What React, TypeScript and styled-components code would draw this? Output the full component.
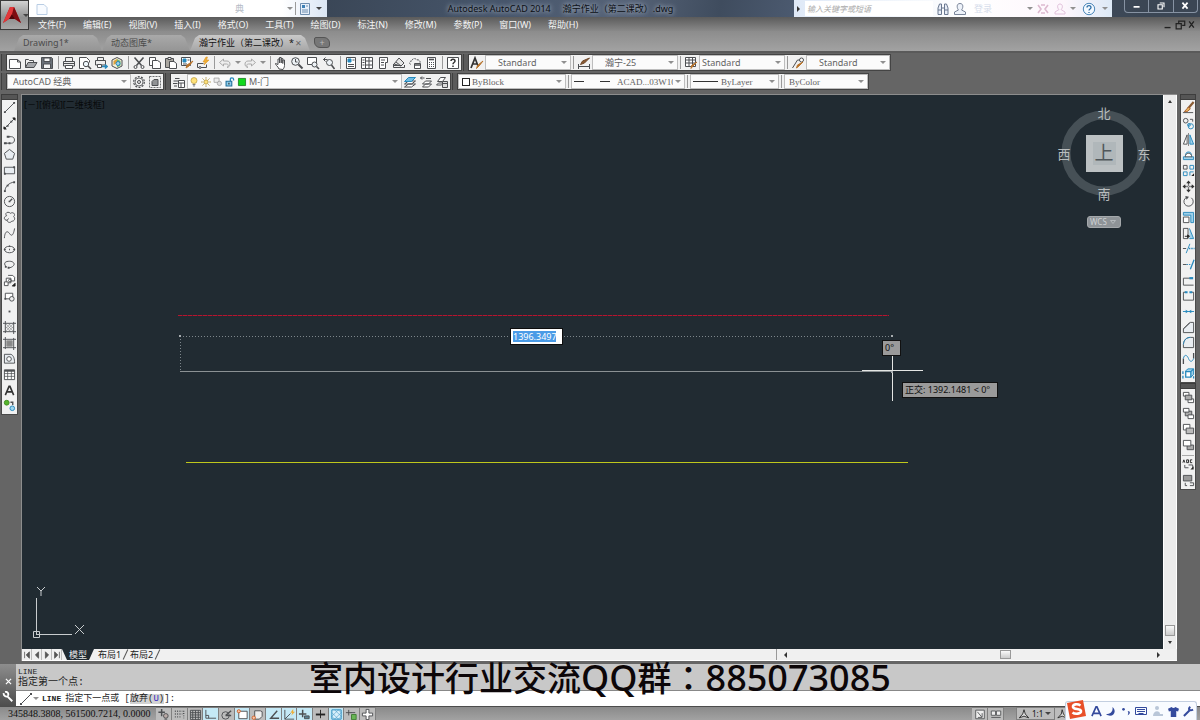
import React from "react";
import styled, { createGlobalStyle, css } from "styled-components";

const UI = `"Noto Sans", "Noto Sans CJK SC", sans-serif`;
const SONG = `"Liberation Serif", "Noto Sans CJK SC", serif`;
const MONO = `"Liberation Mono", "Noto Sans CJK SC", monospace`;

const Global = createGlobalStyle`
  *, *::before, *::after { box-sizing: border-box; }
  body { margin: 0; background: #656565; font-family: ${UI}; font-size: 9px; line-height: 12px; }
  button, select, input { font: inherit; margin: 0; padding: 0; border: 0; background: none; color: inherit; border-radius: 0; }
  h1, p { margin: 0; font: inherit; }
`;

/* ---------- icons, drawn on a 14 unit grid ---------- */

const K = "#4d4f52";
const B = "#2789bd";
const O = "#b8742c";

const icons: Record<string, React.ReactNode> = {
  new: <path d="M1.500 3.500h8l3 2.500v6.500h-11zM9.500 3.500v2.500h3" fill="#fff" />,
  open: <><path d="M1.500 11.500v-8h3l1 1h4v2" /><path d="M1.500 11.500l2.500-5h9l-3 5z" fill="#a5a7aa" /></>,
  save: <><path d="M1.500 1.500h10l1 1v10h-11z" fill="#6a7078" /><path d="M4 2h6v3.500h-6zM3.500 8h7v4.500h-7z" fill="#f5f5f5" /></>,
  print: <><path d="M3.500 5.500v-4h7v4M1.500 5.500h11v4.500h-11z" fill="#eee" /><path d="M3.500 9.500h7v3h-7z" fill="#fff" /><path d="M2 7.500h10" /></>,
  preview: <><path d="M6 12.500h-4.500v-11h7l3 3v2" fill="#fff" /><circle cx="8" cy="8" r="2.700" fill="#eef6fb" /><path d="M10 10l3 3" strokeWidth="1.600" /></>,
  publish: <><path d="M3.500 4.500v-3h6v3M1.500 4.500h10v4.500h-10z" fill="#eee" /><path d="M3.500 8.500h4v3h-4z" fill="#fff" /><path d="M8 10.500h5M11 8.500l2 2-2 2" stroke={B} strokeWidth="1.600" /></>,
  dwf: <><path d="M2 4l5-2.500 5 2.500v6l-5 2.500-5-2.500z" fill="#f4f0dc" /><path d="M7 3l3.500 2v4.500l-3.500 2z" fill="#73b36a" stroke="none" /><path d="M7 7V3L3.500 5v4z" fill="#e0a13a" stroke="none" /><circle cx="8" cy="7.500" r="2" fill="#9fd1ea" stroke={B} /></>,
  cut: <><path d="M2.500 1.500l7 8M11.500 1.500l-7 8" strokeWidth="1.600" /><circle cx="3.500" cy="11" r="1.500" /><circle cx="10.500" cy="11" r="1.500" /></>,
  copy: <><path d="M1.500 1.500h6v8h-6z" fill="#fff" /><path d="M4.500 4.500h5l3 2v6h-8z" fill="#fff" /></>,
  paste: <><path d="M1.500 2.500h8v9h-8z" fill="#a9a6a0" /><path d="M4 1.500h3v2h-3z" fill="#fff" /><path d="M5.500 5.500h4.500l2.500 2v5h-7z" fill="#fff" /></>,
  match: <><path d="M1.500 1.500h9v8h-9z" fill="#fff" /><path d="M3 3h3v3h-3z" fill={B} stroke={B} /><path d="M7.500 4h2M3 8h4" /><path d="M13 5l-4 5-3 2 1-3z" fill={O} stroke={O} /></>,
  block: <><path d="M1.500 7.500h6M1.500 7.500v4h9v-3" fill="none" /><path d="M10 1l-3 5h2l-1 3 5-5h-2.500l1-3z" fill="#f0ae33" stroke="#d88f1e" strokeWidth=".5" /><circle cx="4" cy="11.500" r="1" fill="#fff" /></>,
  undo: <path d="M1.500 6.500l4-3.500v2h3.500c4 0 4 6 0 6.500c2-1.500 1.500-3.500-.5-3.500h-3v2z" fill="#eee" stroke="#aaa" />,
  redo: <path d="M12.500 6.500l-4-3.500v2h-3.500c-4 0-4 6 0 6.500c-2-1.500-1.500-3.500.5-3.500h3v2z" fill="#eee" stroke="#aaa" />,
  pan: <path d="M5 13c-1-3-4-4-3.500-5.500l2.500 1v-5.500h1.500v4-5.500h1.700v5.500-4.500h1.600v5-3.500h1.700v5.500c0 2-1 3-1.500 4z" fill="#fff" />,
  zoomrt: <><circle cx="5.500" cy="5.500" r="3.800" fill="#eef3f7" /><path d="M5.500 3v3h2" /><path d="M8.500 8.500l4 4" strokeWidth="2" /></>,
  zoomwin: <><path d="M1.500 1.500h9v7h-9z" fill="#fff" /><circle cx="8.500" cy="8.500" r="2.500" fill="#eef3f7" /><path d="M10.500 10.500l2.500 2.500" strokeWidth="1.600" /></>,
  zoomprev: <><circle cx="7.500" cy="6.500" r="3" fill="#eef3f7" /><path d="M9.500 9l3 4" strokeWidth="1.600" /><path d="M5.500 3.500h-4M3.500 1.500l-2 2 2 2" stroke={K} /></>,
  props: <><path d="M2.500 1.500h9v11h-9z" fill="#fff" /><path d="M4 3h3v3h-3z" fill={B} stroke={B} /><path d="M8.500 4h2M4 8.500h6M4 10.500h6" /></>,
  dc: <><path d="M1.500 1.500h11v11h-11zM5.500 1.500v11M5.500 5h7M5.500 9h7M9 1.500v11" fill="#fff" /><path d="M2.500 4h2M2.500 6.500h2M2.500 9h2" /></>,
  palette: <><path d="M3.500 1.500h8v5h-2v6h-6z" fill="#fff" /><path d="M5 4h4M5 6.500h3M5 9h3" /></>,
  sheet: <><path d="M2 8l5-6 5 5-3 3z" fill="#e6e6e6" /><path d="M4 6l5 4M1.500 8v3.500h11v-2.500M1.500 9.500h8" fill="none" /></>,
  markup: <><path d="M2.500 8.500c-2-2 0-4 1.500-3.500c0-3 4-3 4.500-1c3-1 4.500 2 3 3.500" fill="none" strokeDasharray="2 1" /><path d="M6.500 7.500h6v5h-6z" fill="#fff" /><path d="M6.500 9h6" strokeWidth="1.500" /></>,
  calc: <><path d="M3.500 1.500h8v11h-8z" fill="#fff" /><path d="M5 3.500h5" strokeWidth="1.600" /><path d="M5 6.500h5M5 8.500h5M5 10.500h5" strokeDasharray="1 1" /></>,
  textstyle: <><path d="M1 12L5 2l3 8M2.500 8h4.500" strokeWidth="1.700" stroke="#333" /><path d="M13 5l-4 5-2.500 2.500 1-3z" fill={O} stroke={O} /></>,
  dimstyle: <><path d="M1.500 8v5M12.500 8v5M1.500 10.500h11" /><path d="M12.500 2l-5 5-4 1.500 2-3.500z" fill="#8b5a33" stroke="#6d472a" /></>,
  tablestyle: <><path d="M1.500 1.500h10v9h-10zM1.500 4h10M5 1.500v9M8.500 1.500v9M1.500 7h10" fill="#fff" /><path d="M13 6l-4 4-2 2.500.5-3z" fill={O} stroke={O} /></>,
  mleader: <><path d="M1.500 12l5-8h3" /><circle cx="10.500" cy="4" r="2" fill="#fff" /><path d="M12 6l-4 4-2.500 2 1-3z" fill={O} stroke={O} /></>,
  gear: <><circle cx="7" cy="7" r="5.300" strokeDasharray="2 1.300" strokeWidth="1.200" /><circle cx="7" cy="7" r="4" strokeWidth=".8" /><circle cx="7" cy="7" r="1.500" /></>,
  gearbox: <><path d="M1.500 1.500h11v11h-11z" strokeDasharray="2 1" strokeWidth=".8" /><path d="M4 6.500l2-2h4v6h-6z" fill="#909294" /></>,
  layermgr: <><path d="M3 3.500h4.500M1.500 6h5M1 8.500h4.500M2 11h3" strokeWidth="1.100" /><path d="M6.500 5.500h6v7h-6zM6.500 8h6M9 8v4.500" fill="#fff" /></>,
  bulb: <><circle cx="7" cy="5" r="4.200" fill="#ffe27a" stroke="#b89a3d" /><path d="M5 10.500h4M5.500 12.500h3" /></>,
  sun: <><circle cx="7" cy="7" r="3" fill="#ffe07a" stroke="#a48830" /><path d="M7 0v2.500M7 11.500V14M0 7h2.500M11.500 7H14M2 2l2 2M10 10l2 2M2 12l2-2M10 4l2-2" stroke="#a48830" /></>,
  vpfreeze: <><path d="M1.500 1.500h7v6h-7z" stroke="#999" fill="#eee" /><circle cx="9" cy="9" r="3" stroke="#999" fill="#ddd" /></>,
  unlock: <><path d="M7.500 6V3c0-2.500 4.500-2.500 4.500 0v2" stroke={B} strokeWidth="1.800" /><path d="M1.500 6h8v6.500h-8z" fill="#8fcdea" stroke="#1f6f9c" strokeWidth="1.500" /><path d="M5.500 8v2.500" stroke="#222" strokeWidth="1.500" /></>,
  green: <path d="M2 2h10v10h-10z" fill="#12d81d" stroke="#0b6d12" />,
  layer1: <><path d="M1.500 12h7l4-3h-7zM1.500 9h7l4-3h-7z" fill="#fff" /><path d="M1.500 6.500h7l4-4h-7z" fill="#70bce2" stroke={B} /></>,
  layer2: <><path d="M3.500 12h6l3-3h-6zM3.500 9h6l3-3h-6z" fill="#fff" /><path d="M7 3.500h5M1.500 3h4M3 1.500l-1.500 1.500 1.500 1.500" /></>,
  layer3: <><path d="M1.500 10h5l2-2h-5zM2.500 6.500h5l3-4h-5z" fill="#fff" /><path d="M7.500 6.500h5v6h-5zM7.500 8.500h5" fill="#ddd" /></>,
  line: <><path d="M2 12L12 2" /><path d="M1 12h2M11 2h2" strokeWidth="2" /></>,
  xline: <><path d="M2 12L12 2" /><path d="M1 10.500v2.500h2.500zM10.500 1H13v2.500z" fill="#222" stroke="#222" /><path d="M4 9.500h2M8 5h2" strokeWidth="1.800" /></>,
  pline: <><path d="M2 11h7c4.500 0 4.500-7 0-7h-4" /><path d="M1 11h3M6 11h2M4 4h3" strokeWidth="2" /></>,
  polygon: <path d="M7 1.500l5.500 4.300-2 6.200h-7l-2-6.200z" fill="#e9edf1" />,
  rect: <><path d="M1.500 3.500h11v7h-11z" fill="#e9edf1" /><path d="M1 10.500h2M11 3.500h2" strokeWidth="2.400" /></>,
  arc: <><path d="M2 13C2 7 6 3 13 2" /><path d="M1 12h2M11 2.500h2M4 6h2" strokeWidth="2" /></>,
  circle: <><circle cx="7" cy="7" r="5.500" /><path d="M7 7l3-3M6 7h2" strokeWidth="1.400" /></>,
  cloud: <path d="M4 5c-3-3 2-5 4-2.500c3-2 6 1 3.500 3.500c2 2 1 5-2 5c-2 2.500-5 1-5-1c-4 0-4-4-.5-5zM4.500 10l1.500-2" />,
  spline: <path d="M1.500 12C2 4 5 4 7 7s4 3 5.500-5.500" />,
  ellipse: <><ellipse cx="7" cy="7" rx="5.500" ry="3.500" /><path d="M1 7h2M11 7h2M6.500 7h1M6.500 3.500h1" strokeWidth="1.800" /></>,
  earc: <><path d="M3 9C0 5 3 3.500 7 3.500s6 2.500 4.500 4.500-4 2.500-5 2.500" /><path d="M2 9.500h2M5 10.500h2" strokeWidth="2" /></>,
  insert: <><path d="M5.500 1.500h5l2 2v4h-4M3.500 4.500h5v5h-5z" fill="#fff" /><path d="M1.500 8.500h4v4h-4z" fill="#fff" /><circle cx="7.500" cy="7" r="1.500" /><path d="M10 13h3v-3z" fill="#222" stroke="#222" /></>,
  mkblock: <><path d="M2.500 3.500h8v6h-8z" fill="#fff" /><circle cx="9.500" cy="9.500" r="2.500" fill="#eee" /><path d="M1.500 9.500h2" strokeWidth="2" /></>,
  point: <path d="M6 7h2" strokeWidth="2" />,
  hatch: <><path d="M2.500 0v13M11.500 1v13M0 2.500h14M0 11.500h14" /><path d="M3 3l8 8M3 6l5 5M6 3l5 5M11 3l-8 8M8 3L3 8M11 6l-5 5" strokeWidth=".4" /></>,
  gradient: <><path d="M2.500 0v13M11.500 1v13M0 2.500h14M0 11.500h14" /><path d="M4 4h6v6h-6z" fill="#888" stroke="#999" /></>,
  region: <><path d="M1.500 2.500h7c3 1 4 5 4 9.500h-11z" fill="#e9edf1" /><circle cx="6.500" cy="7.500" r="2.500" fill="#fff" /></>,
  table: <><path d="M1.500 2h11v10.500h-11z" fill="#fff" /><path d="M1.500 3h11" strokeWidth="2" /><path d="M1.500 6h11M1.500 9h11M5 3v9M9 3v9" strokeWidth=".8" /></>,
  mtext: <path d="M2.500 12L6.500 2.500h1l4 9.500M4.300 8.500h5.400" stroke="#333" strokeWidth="1.700" />,
  addsel: <><circle cx="4" cy="4" r="2.600" fill="#56b52c" stroke="#3f8c1f" /><circle cx="10" cy="10" r="2.500" fill="#9fd6f0" stroke={B} /><path d="M8 3.500h2.500v3" strokeWidth="1.500" /></>,
  erase: <><path d="M12.500 1l-6 7" stroke="#8b5d35" strokeWidth="2.400" /><path d="M7 6.500l2 2-3.500 3h-3z" fill="#e8b45c" stroke="#a55b2e" /><path d="M1 12.500h11" /></>,
  copyobj: <><circle cx="4" cy="4" r="2.500" /><circle cx="9.500" cy="10" r="2.800" stroke={B} /><circle cx="7.500" cy="8.500" r="1.500" stroke={B} /><path d="M8.500 2.500h3v2.500" /></>,
  mirror: <><path d="M5.500 2v10h-4z" fill="#fff" /><path d="M8.500 2v10h4z" fill="#9fd1ea" stroke={B} /><path d="M7 0v14" strokeWidth=".7" /></>,
  offset: <><path d="M1.500 12.500h11v-3h-2.500c2-7-8-7-6 0h-2.500z" fill="#9fd1ea" stroke={B} /><path d="M3.500 9.500h7c0-5-7-5-7 0z" fill="#fff" /></>,
  array: <><path d="M1.500 1.500h4v4h-4z" /><path d="M8.500 1.500h4v4h-4zM1.500 8.500h4v4h-4z" stroke={B} /><path d="M8.500 12.500v-4h4" stroke={B} /><path d="M10 13h3v-3z" fill="#222" stroke="none" /></>,
  move: <><path d="M7 2v3M7 9v3M2 7h3M9 7h3" strokeWidth="1.400" /><path d="M4.500 3.500L7 .5l2.500 3zM4.500 10.500l2.500 3 2.500-3zM3.500 4.500L.5 7l3 2.500zM10.500 4.500l3 2.500-3 2.500z" fill="#333" stroke="none" /><circle cx="7" cy="7" r="1" /></>,
  rotate: <><path d="M5 2.500a5 5 0 1 0 5 .5" /><path d="M3.500 1l4 1-2.500 3z" fill={K} stroke="none" /></>,
  scale: <><path d="M1.500 1.500h11v11h-3v-8h-8z" fill="#9fd1ea" stroke={B} /><path d="M1.500 6.500h6v6h-6z" fill="#fff" /></>,
  stretch: <><path d="M1.500 1.500h5v11h-5z" /><path d="M8 1.500l4.500 11h-4.500" fill="#9fd1ea" stroke={B} /><path d="M3 10h5M6 8.500L8 10l-2 1.500z" stroke="#222" /></>,
  trim: <><path d="M1 7h3.500" /><path d="M8.500 2l-4 10" stroke={B} /><path d="M7.500 7h6" stroke={B} strokeDasharray="1.500 1" strokeWidth="1.400" /></>,
  extend: <><path d="M1 7h4" /><path d="M5 7h4" strokeDasharray="1.500 1" stroke={B} /><path d="M13 2l-4 10" stroke={B} strokeWidth="1.400" /></>,
  breakpt: <><path d="M9 4.500h-7.500v7.500h11" /><path d="M8 4.500h4" stroke={B} strokeWidth="2.400" /></>,
  brk: <><path d="M4 3.500h-2.500v8.500h11v-8.500h-2.500" /><path d="M3 3.500h3M8 3.500h3" stroke={B} strokeWidth="2.400" /></>,
  join: <><path d="M1 7h12" stroke={B} /><path d="M4 5l3 2-3 2zM10 5L7 7l3 2z" fill={B} stroke="none" /></>,
  chamfer: <><path d="M1.500 12.500v-4L9 1.500h3.500v11z" fill="#e9edf1" /><path d="M1.500 8.500L8.500 1.500" /></>,
  fillet: <><path d="M1.500 12.500V9C2 4 5 1.500 9 1.500h3.500v11z" fill="#e9edf1" /><path d="M1.500 9C2 4 5 1.500 9 1.500" stroke={B} /></>,
  blend: <><path d="M1.500 13V7M12.500 1v6" strokeWidth="1.400" /><path d="M1.500 7c1-5 4-4 5.500 0s4 4 5.500 0" stroke={B} /></>,
  explode: <><path d="M3.500 4.500l3-2.500h6v6l-3 3" fill="#9fd1ea" stroke={B} /><path d="M4 5h5.500v6h-5.500zM9.500 5l3-3" fill="#fff" stroke={B} strokeWidth="1.400" /><path d="M1 4.500v3M1 9.500v3M12.500 10v2.500" stroke={B} strokeWidth="1.400" /></>,
  front: <><path d="M1.500 1.500h6v4h-6zM6.500 8.500h6v4h-6z" fill="#fff" /><path d="M3.500 4.500h7v5h-7z" fill="#aaa" /></>,
  back: <><path d="M3.500 4.500h7v5h-7z" fill="#aaa" /><path d="M1.500 1.500h6v4h-6zM6.500 8.500h6v4h-6z" fill="#fff" /></>,
  above: <><path d="M1.500 1.500h7v6h-7z" fill="#fff" /><path d="M4.500 5.500h8v6h-8z" fill="#bbb" /></>,
  under: <><path d="M5.500 6.500h7v5h-7z" fill="#aaa" /><path d="M1.500 1.500h8v6h-8z" fill="#fff" /></>,
  abc: <><path d="M1 5l1-3 1 3M5 2h2v3H5zM11 2H9v3H11" stroke="#222" /><path d="M3 7.500v3h4M7 7.500h4.500v4" /><path d="M9 12.500h3.500V9z" fill="#222" stroke="none" /></>,
  hback: <><path d="M1.500 1.500h9v6h-9z" fill="#999" /><path d="M8.500 9.500h4v3h-4M3.500 9.500v3h2" /></>,
  qnew: <path d="M2 2.500h7l3 3v7h-10z" stroke="#b9cde4" fill="#f8fbff" />,
  ws: <><path d="M2.500 1.500h9v11h-9z" fill="#e6effa" stroke="#6f8eb0" /><path d="M4 3h3v3h-3z" fill="#3c7fb5" stroke="none" /><path d="M8 4h2M4 8h6M4 10h6" stroke="#6f8eb0" /></>,
  find: <path d="M2 12.500V6l1.500-4h2V12.500zM8.500 12.500V2h2L12 6v6.500zM5.500 6h3M2 8h3.500M8.500 8H12" stroke="#6a7890" fill="#e8eef8" />,
  user: <path d="M7 1.500c4 0 3 5 1.500 6.500l4 2v2.500h-11V10l4-2C4 6.500 3 1.500 7 1.500z" stroke="#7a869a" fill="#eef3fa" />,
  exch: <path d="M2 3l3 4-3 4M12 3L9 7l3 4M5 3h4M5 11h4" stroke="#ddb9cf" strokeWidth="1.600" />,
  a360: <path d="M7 2c3 0 3 4 1 5.500l4 2.500v2H2v-2l4-2.500C4 6 4 2 7 2z" stroke="#e2c2dc" />,
  help: <><circle cx="7" cy="7" r="5.700" stroke="#4a86b8" fill="#f2f8ff" /><path d="M5 5.500c0-2.500 4-2.500 4 0C9 7 7 7 7 8.500M7 10v1" stroke="#2d6da5" strokeWidth="1.300" /></>,
  qmark: <><path d="M1.500 1.500h11v11h-11z" fill="#fff" /><path d="M5 5c0-2.500 4-2.500 4 0 0 1.500-2 1.500-2 3.200M7 9.500v1.500" strokeWidth="1.500" stroke="#333" /></>,
  min: <path d="M3 8h7" stroke="#fff" strokeWidth="2" />,
  max: <path d="M5.500 3.500h5v5M3.500 5.500h5v5h-5z" stroke="#fff" strokeWidth="1.300" />,
  close: <path d="M4 3l6 7M10 3l-6 7" stroke="#fff" strokeWidth="2" />,
  dmin: <path d="M3 10h7" stroke="#222" strokeWidth="1.600" />,
  dmax: <path d="M5.500 5v-2.500h7v5h-3M2.500 5.500h6v6h-6z" stroke="#222" strokeWidth="1.400" />,
  dclose: <path d="M4 3l6 8M10 3l-6 8" stroke="#222" strokeWidth="1.700" />,
  x: <path d="M3 3l8 8M11 3l-8 8" stroke="#fff" strokeWidth="1.900" />,
  wrench: <path d="M12 12L6 6M2 2.500c-.5 3 2.500 5 5 3.500M3.500 1c3-.5 4.500 2 3.500 4.500" stroke="#fff" strokeWidth="2.200" />,
  infer: <><path d="M5 1v8M1.500 4.500h7" strokeWidth="1.600" /><circle cx="9.500" cy="8.500" r="2.500" fill="#b8a9a5" /><path d="M8 12h3" /></>,
  snap: <path d="M2 3.500h8M2 6.500h8M2 9.500h6M11.500 3v8" strokeDasharray="1 1.500" strokeWidth="1.500" />,
  grid: <path d="M1.500 2.500h11v10h-11zM1.500 5h11M1.500 7.500h11M1.500 10h11M4 2.500v10M7 2.500v10M10 2.500v10" />,
  ortho: <path d="M2 2v9h11M2 8h3v3" />,
  polar: <><circle cx="6" cy="8" r="4" /><path d="M6 8l6-5M6 8h6" strokeWidth="1.500" /></>,
  osnap: <><path d="M3 3.500h9v8h-9z" fill="#fff" /><circle cx="3" cy="3.500" r="1.700" fill="#f8c7a8" stroke="#d0622c" /></>,
  osnap3: <><path d="M4 3h6l2 1v5l-3 3h-5z" fill="#eee" /><circle cx="3" cy="10.500" r="1.800" fill="#f8c7a8" stroke="#d0622c" /></>,
  otrack: <path d="M11 3L4 11h9" strokeWidth="1.500" />,
  ducs: <><path d="M2 2v10h10M2 12l6-6" /><path d="M11 1l-3 4h2l-1 3 4-4h-2z" fill="#f0ae33" stroke="none" /></>,
  dyn: <><path d="M5 2v8M1 6.500h8" strokeWidth="1.600" /><path d="M7 8.500h5v3h-5z" fill="#5b7f90" /></>,
  lwt: <><path d="M2 7h10" strokeWidth="2" stroke="#222" /><path d="M7 2v9" stroke="#222" /></>,
  tpy: <><path d="M2 2h10v10h-10z" fill="#d8effa" stroke={B} /><path d="M2 5l7 7M2 9l3 3M5 2l7 7M9 2l3 3M12 5l-7 7M9 2l-7 7M12 9l-3 3" stroke={B} strokeWidth=".5" /></>,
  qp: <><path d="M4 2v6M1 5h6M6 5h5" /><path d="M7 7h5v5.500h-5z" fill="#69b555" stroke="#3f7d34" /></>,
  sc: <path d="M5.500 1.500h3v4h4v3h-4v4h-3v-4h-4v-3h4z" fill="#fff" />,
  model: <><path d="M2 2.500h10v10h-10z" fill="#eee" /><path d="M4 4.500l5 6M9.500 6v5h-5" /></>,
  views: <path d="M1.500 3.500h5v5h-5zM7.500 3.500h5v5h-5zM1.500 11h11" fill="#eee" />,
  scaleA: <path d="M7 2l1.500 5 4 4.500-5.500-2-5.500 2 4-4.500z" fill="#ddd" stroke="#222" />,
  scaleB: <><path d="M6 2l1.500 5 4 4.500-5.500-2-5 2 4-4.500z" fill="#ddd" stroke="#222" /><circle cx="11" cy="9" r="2" fill="#ffd84d" stroke="none" /></>,
  cmd: <><path d="M2 12L12 2" /><path d="M1 12h2M11 2h2" strokeWidth="2" /></>,
};

const Svg = styled.svg<{ $size?: number }>`
  display: block;
  flex: none;
  width: ${(p) => p.$size ?? 14}px;
  height: ${(p) => p.$size ?? 14}px;
`;

const Icon = ({ name, size }: { name: string; size?: number }) => (
  <Svg $size={size} viewBox="0 0 14 14" fill="none" stroke={K} strokeWidth="1" aria-hidden="true">
    {icons[name]}
  </Svg>
);

const Caret = styled.span<{ $light?: boolean }>`
  flex: none;
  width: 0;
  height: 0;
  border: 3px solid transparent;
  border-top-color: ${(p) => (p.$light ? "#909090" : "#444")};
  border-bottom: 0;
  pointer-events: none;
`;

const IconButton = styled.button<{ $w?: number }>`
  display: flex;
  align-items: center;
  justify-content: center;
  flex: none;
  width: ${(p) => p.$w ?? 16}px;
  height: 15px;
`;

/* ---------- page ---------- */

const Page = styled.div`
  position: relative;
  display: flex;
  flex-direction: column;
  min-height: 100vh;
  overflow: hidden;
  background: #656565;
`;

const TitleBar = styled.header`
  display: flex;
  align-items: stretch;
  height: 17px;
  padding-left: 29px;
  background: linear-gradient(100deg, #343f4d 20%, #47566b 42%, #566377 52%, #3f4c5e 60%, #53627a 70%, #3b4654 95%);
`;

const AppButton = styled.button`
  position: absolute;
  left: 0;
  top: 0;
  z-index: 2;
  display: flex;
  align-items: center;
  width: 29px;
  height: 30px;
  border: 1px solid #3a3a3a;
  background: linear-gradient(#d2d2d2, #8f8f8f 60%, #a9a9a9);
`;

const QuickAccess = styled.div`
  display: flex;
  align-items: center;
  width: 298px;
  padding: 0 1px 0 6px;
  background: linear-gradient(90deg, #fff 85%, #dbe6f4);
  color: #b5bcc6;
`;

const QuickSelect = styled.select`
  appearance: none;
  flex: 1;
  padding-left: 186px;
`;

const Title = styled.h1`
  display: flex;
  flex: 1;
  justify-content: center;
  gap: 12px;
  padding-top: 3px;
  color: #0c0f14;
  white-space: nowrap;
  text-shadow: 0 0 4px #aeb9c8, 0 0 6px #8f9caf;
`;

const InfoCenter = styled.div`
  display: flex;
  align-items: center;
  gap: 3px;
  width: 318px;
  padding-right: 2px;
  background: linear-gradient(90deg, #dfe9f7, #fff 55%, #fdf6fc 85%, #dde9f6);
  color: #d5dcea;
`;

const Search = styled.input`
  width: 128px;
  height: 15px;
  padding: 0 2px;
  background: #fff;
  font-size: 8px;
  font-style: italic;
  &::placeholder { color: #a9a9a9; opacity: 1; }
`;

const SideArrow = styled.span<{ $left?: boolean }>`
  width: 0;
  height: 0;
  border: 3px solid transparent;
  ${(p) => (p.$left ? css`border-right-color: #333; border-left: 0;` : css`border-left-color: #333; border-right: 0;`)}
`;

const SignIn = styled.span`
  width: 54px;
  padding-left: 4px;
`;

const WindowButtons = styled.div`
  display: flex;
  width: 74px;
  height: 13px;
  margin: 0 2px 0 12px;
  border: 1px solid #8793a3;
  border-top: 0;
  border-radius: 0 0 4px 4px;
  button { flex: 1; height: 12px; display: flex; align-items: center; justify-content: center; }
  button + button { border-left: 1px solid #8793a3; }
`;

const MenuBar = styled.nav`
  display: flex;
  align-items: center;
  height: 14px;
  gap: 17px;
  padding: 1px 3px 0 38px;
  background: linear-gradient(#5b5b5b, #898989);
  color: #f4f4f4;
  white-space: nowrap;
`;

const DocButtons = styled.div`
  display: flex;
  margin-left: auto;
`;

const TabBar = styled.div`
  display: flex;
  align-items: flex-end;
  height: 22px;
  padding-left: 14px;
  border-bottom: 2px solid #5a5a5a;
  background: linear-gradient(#8c8c8c, #a2a2a2);
`;

const DocTab = styled.button<{ $active?: boolean; $w: number }>`
  display: flex;
  align-items: center;
  justify-content: space-between;
  width: ${(p) => p.$w}px;
  height: 16px;
  padding: 0 8px 0 9px;
  color: ${(p) => (p.$active ? "#111" : "#4b4b4b")};
  background: ${(p) => (p.$active ? "linear-gradient(#c9c9c9, #a6a6a6)" : "linear-gradient(#a9a9a9, #959595)")};
  clip-path: polygon(0 100%, 5px 3px, 9px 0, calc(100% - 9px) 0, calc(100% - 5px) 3px, 100% 100%);
  white-space: nowrap;
`;

const TabClose = styled.span`
  color: #666;
  font-size: 8px;
`;

const NewTab = styled.button`
  width: 16px;
  height: 11px;
  margin: 0 0 3px 4px;
  border: 1px solid #555;
  border-radius: 2px 6px 3px 6px;
  background: #777;
  color: #bbb;
  line-height: 8px;
`;

const Toolbars = styled.div`
  display: flex;
  flex-direction: column;
  gap: 2px;
  padding: 1px 0 4px 1px;
`;

const ToolRow = styled.div`
  display: flex;
  height: 17px;
`;

const Grip = styled.span`
  width: 6px;
  border: 1px solid #3f3f3f;
  border-width: 0 1px;
  background: #5b5b5b;
`;

const Strip = styled.div`
  display: flex;
  align-items: center;
  margin-right: 1px;
  border: 1px solid #444;
  border-left: 0;
  background: #f1f1f1;
`;

const Separator = styled.span<{ $wide?: boolean }>`
  width: 1px;
  height: 13px;
  margin: 0 2px 0 ${(p) => (p.$wide ? 3 : 2)}px;
  background: #9a9a9a;
`;

const Combo = styled.label<{ $w: number; $song?: boolean; $pad?: number }>`
  display: flex;
  align-items: center;
  gap: 2px;
  width: ${(p) => p.$w}px;
  height: 15px;
  padding: 0 3px 0 ${(p) => p.$pad ?? 5}px;
  border: 1px solid #bdbdbd;
  background: #fbfbfb;
  color: #636363;
  font-family: ${(p) => (p.$song ? SONG : UI)};
  select { appearance: none; flex: 1; min-width: 0; overflow: hidden; }
`;

const Swatch = styled.span`
  width: 8px;
  height: 8px;
  border: 1px solid #222;
  background: #fff;
`;

const Dash = styled.span<{ $w: number; $gap: number }>`
  flex: none;
  width: ${(p) => p.$w}px;
  height: 1px;
  margin-right: ${(p) => p.$gap}px;
  background: #333;
`;

const Work = styled.main`
  display: flex;
  flex: 1;
  align-items: stretch;
`;

const SideColumn = styled.div<{ $right?: boolean }>`
  display: flex;
  flex-direction: column;
  width: ${(p) => (p.$right ? 16 : 18)}px;
  margin: ${(p) => (p.$right ? "0 4px 0 3px" : "0 3px 0 0")};
  padding-left: ${(p) => (p.$right ? 0 : 1)}px;
`;

const SideGrip = styled.span`
  height: 6px;
  border: 1px solid #3d3d3d;
  background: #555;
`;

const SideStrip = styled.div<{ $h: number }>`
  display: flex;
  flex-direction: column;
  align-items: center;
  justify-content: space-around;
  height: ${(p) => p.$h}px;
  border: 1px solid #4a4a4a;
  border-top: 0;
  background: #f1f1f1;
  button { width: 14px; height: 14px; }
  svg { width: 13px; height: 13px; }
  hr { width: 12px; height: 1px; margin: 0; border: 0; background: #aaa; }
`;

const Frame = styled.section`
  display: flex;
  flex: 1;
  flex-direction: column;
  min-width: 0;
  border: 1px solid #8d8d8d;
  border-width: 1px 0 0 1px;
`;

const CanvasRow = styled.div`
  display: flex;
  flex: 1;
`;

const Canvas = styled.div`
  position: relative;
  flex: 1;
  min-height: 554px;
  overflow: hidden;
  background: #212b32;
`;

const Drawing = styled.svg`
  position: absolute;
  left: 0;
  top: 0;
  width: 100%;
  height: 100%;
`;

const ViewLabel = styled.p`
  position: absolute;
  left: 2px;
  top: 4px;
  color: #07090a;
`;

const Ucs = styled.svg`
  position: absolute;
  left: 9px;
  bottom: 7px;
  width: 60px;
  height: 56px;
`;

const Cube = styled.svg`
  position: absolute;
  right: 9px;
  top: 8px;
  width: 100px;
  height: 102px;
  font-family: "Noto Sans CJK SC", sans-serif;
  font-size: 13px;
`;

const Wcs = styled.button`
  position: absolute;
  right: 42px;
  top: 121px;
  display: flex;
  align-items: center;
  justify-content: space-between;
  width: 34px;
  height: 12px;
  padding: 0 4px 0 2px;
  border: 1px solid #a4a8ab;
  border-radius: 3px;
  background: #8e9397;
  color: #cdd1d3;
  font-size: 8px;
  line-height: 10px;
`;

const LengthInput = styled.input`
  position: absolute;
  left: 488px;
  top: 233px;
  width: 53px;
  height: 17px;
  padding: 0 6px 0 0;
  border: 1px solid #0d0d0d;
  background: linear-gradient(#4a9be6, #4a9be6) 2px 2px / 43px 11px no-repeat #fff;
  color: #fff;
  text-indent: 2px;
`;

const Tip = styled.span<{ $x: number; $y: number; $w: number }>`
  position: absolute;
  left: ${(p) => p.$x}px;
  top: ${(p) => p.$y}px;
  width: ${(p) => p.$w}px;
  height: 16px;
  padding: 1px 2px;
  border: 1px solid #111;
  background: #9a9a9a;
  color: #111;
  white-space: nowrap;
`;

const VScroll = styled.div`
  display: flex;
  flex-direction: column;
  align-items: center;
  width: 14px;
  padding: 5px 0;
  border-left: 1px solid #fff;
  border-right: 1px solid #fff;
  background: #ececec;
`;

const Up = styled.span`
  border: 2px solid transparent;
  border-bottom: 3px solid #333;
  border-top: 0;
`;

const Down = styled.span`
  margin-top: 5px;
  border: 2px solid transparent;
  border-top: 3px solid #333;
  border-bottom: 0;
`;

const Thumb = styled.span<{ $v?: boolean }>`
  width: ${(p) => (p.$v ? 10 : 11)}px;
  height: ${(p) => (p.$v ? 11 : 9)}px;
  border: 1px solid #999;
  background: linear-gradient(#fafafa, #ccc);
  margin-top: ${(p) => (p.$v ? "auto" : "0")};
`;

const LayoutBar = styled.div`
  display: flex;
  align-items: center;
  height: 12px;
  background: #f0f0f0;
  border-bottom: 1px solid #fff;
`;

const NavButton = styled.button`
  display: flex;
  width: 10px;
  height: 11px;
  align-items: center;
  justify-content: center;
  border-right: 1px solid #bbb;
`;

const LayoutTab = styled.button<{ $active?: boolean }>`
  width: ${(p) => (p.$active ? 32 : 31)}px;
  height: 11px;
  line-height: 11px;
  color: ${(p) => (p.$active ? "#e9e9e9" : "#222")};
  ${(p) => p.$active && css`background: #212b32; clip-path: polygon(0 0, 100% 0, calc(100% - 5px) 100%, 5px 100%);`}
`;

const Slash = styled.span`
  width: 1px;
  height: 11px;
  background: #555;
  rotate: 25deg;
`;

const HScroll = styled.div`
  display: flex;
  align-items: center;
  flex: none;
  width: 401px;
  height: 11px;
  margin-left: auto;
  padding: 0 17px 0 7px;
  border-left: 1px solid #999;
`;

const Track = styled.span<{ $grow: number }>`
  flex: ${(p) => p.$grow};
`;

const Command = styled.section`
  position: relative;
  display: flex;
  height: 43px;
  margin-top: 3px;
  border-bottom: 1px solid #4c4c4c;
  background: #c8c8c8;
`;

const CommandGrip = styled.div`
  display: flex;
  flex-direction: column;
  align-items: center;
  justify-content: space-between;
  width: 16px;
  padding: 3px 0;
  background: linear-gradient(#8d8d8d, #4d4d4d);
`;

const Dots = styled.span`
  width: 12px;
  height: 4px;
  background: radial-gradient(circle, #ccc 40%, transparent 45%) 0 0 / 2px 2px;
`;

const CommandText = styled.div`
  display: flex;
  flex: 1;
  flex-direction: column;
  color: #1d1d1d;
  font-family: ${MONO};
  font-size: 10px;
`;

const History = styled.div`
  display: flex;
  flex: 1;
  flex-direction: column;
  padding: 2px;
  line-height: 11px;
  small { font-size: 8px; }
`;

const Prompt = styled.label`
  display: flex;
  align-items: center;
  height: 18px;
  padding-left: 3px;
  border-top: 1px solid #888;
  background: #fff;
  font-size: 9px;
  white-space: pre;
  b { margin: 0 4px 0 3px; font-size: 8px; }
  mark { background: #d3d3d3; color: inherit; }
  em { color: #3527c2; font-style: normal; }
  input { flex: 1; outline: 0; }
`;

const Caption = styled.p`
  position: absolute;
  left: 0;
  right: 0;
  top: -5px;
  z-index: 3;
  color: #0c0608;
  font-family: "Noto Sans CJK SC", sans-serif;
  font-size: 34px;
  font-weight: 500;
  line-height: 36px;
  text-align: center;
  white-space: nowrap;
  pointer-events: none;
  span { font-family: "Noto Sans", sans-serif; font-size: 36px; font-weight: 500; }
  i { font-family: "Noto Sans CJK TC", sans-serif; font-style: normal; }
`;

const Status = styled.footer`
  display: flex;
  align-items: center;
  height: 13px;
  padding-left: 8px;
  background: linear-gradient(#8a8a8a, #a2a2a2);
  color: #111;
`;

const Coords = styled.span`
  width: 148px;
  font-family: ${SONG};
  font-size: 10px;
  white-space: nowrap;
`;

const Toggle = styled.button<{ $on?: boolean }>`
  display: flex;
  align-items: center;
  justify-content: center;
  width: 16px;
  height: 13px;
  overflow: hidden;
  border: 1px solid #808080;
  border-width: 1px 1px 0 0;
  background: ${(p) => (p.$on ? "#c5e9f6" : "#bcbcbc")};
`;

const Toggles = styled.div`
  display: flex;
  button:nth-child(3n) { width: 15px; }
`;

const StatusRight = styled.div`
  display: flex;
  align-items: center;
  margin: 0 129px 0 auto;
`;

const ScaleButton = styled.button`
  display: flex;
  align-items: center;
  gap: 2px;
  width: 39px;
  height: 13px;
  margin-left: 12px;
  padding-left: 1px;
  border: 1px solid #808080;
  background: #bcbcbc;
  font-size: 8px;
`;

const Ime = styled.div`
  position: absolute;
  right: 3px;
  bottom: 0;
  z-index: 4;
  display: flex;
  align-items: center;
  justify-content: space-between;
  width: 132px;
  height: 19px;
  padding: 0 2px 0 25px;
  border: 1px solid #c3cfe0;
  border-bottom: 0;
  border-radius: 3px 3px 0 0;
  background: #f8fbff;
`;

const Sogou = styled.svg`
  position: absolute;
  left: -1px;
  top: -2px;
  width: 22px;
  height: 20px;
`;

const Tools = ({ names }: { names: string[] }) => (
  <>
    {names.map((n, i) =>
      n === "|" ? <Separator key={i} $wide /> : n === "v" ? (
        <IconButton key={i} $w={9} aria-label="展开"><Caret $light /></IconButton>
      ) : <IconButton key={i} aria-label={n}><Icon name={n} /></IconButton>
    )}
  </>
);

type PickProps = { label: string; value: string; w: number; song?: boolean; pad?: number; children?: React.ReactNode };
const Pick = ({ label, value, w, song, pad, children }: PickProps) => (
  <Combo $w={w} $song={song} $pad={pad}>
    {children}
    <select aria-label={label}><option>{value}</option></select>
    <Caret $light />
  </Combo>
);

const menus = ["文件(F)", "编辑(E)", "视图(V)", "插入(I)", "格式(O)", "工具(T)", "绘图(D)", "标注(N)", "修改(M)", "参数(P)", "窗口(W)", "帮助(H)"];
const standardTools = ["new", "open", "save", "|", "print", "preview", "publish", "dwf", "|", "cut", "copy", "paste", "match", "block", "|", "undo", "v", "redo", "v", "|", "pan", "zoomrt", "zoomwin", "zoomprev", "|", "props", "dc", "palette", "sheet", "markup", "calc", "|", "qmark"];
const drawTools = ["line", "xline", "pline", "polygon", "rect", "arc", "circle", "cloud", "spline", "ellipse", "earc", "insert", "mkblock", "point", "hatch", "gradient", "region", "table", "mtext", "addsel"];
const modifyTools = ["erase", "copyobj", "mirror", "offset", "array", "move", "rotate", "scale", "stretch", "trim", "extend", "breakpt", "brk", "join", "chamfer", "fillet", "blend", "explode"];
const toggles: [string, boolean][] = [["infer", false], ["snap", false], ["grid", false], ["ortho", true], ["polar", false], ["osnap", true], ["osnap3", false], ["otrack", true], ["ducs", true], ["dyn", true], ["lwt", false], ["tpy", true], ["qp", false], ["sc", false]];

export default function App() {
  return (
    <Page>
      <Global />
      <AppButton aria-label="应用程序菜单">
        <Svg $size={22} viewBox="0 0 22 22">
          <path d="M9 3h4l7 16-6-4H8l-6 4z" fill="#b5151b" />
          <path d="M9 3h4l-1 9-10 7z" fill="#e2383a" />
          <path d="M13 3l7 16-6-4-3-5z" fill="#7d0c11" />
          <path d="M8 15l3-5 3 5z" fill="#4d0609" />
        </Svg>
        <Caret />
      </AppButton>
      <TitleBar>
        <QuickAccess>
          <Icon name="qnew" />
          <QuickSelect aria-label="工作空间"><option>典</option></QuickSelect>
          <Caret $light />
          <Separator />
          <Icon name="ws" />
          <IconButton $w={14} aria-label="自定义快速访问"><Caret /></IconButton>
        </QuickAccess>
        <Title><span>Autodesk AutoCAD 2014</span><span>瀚宁作业（第二课改）.dwg</span></Title>
        <InfoCenter>
          <IconButton $w={8} aria-label="展开"><SideArrow /></IconButton>
          <Search aria-label="搜索" placeholder="输入关键字或短语" />
          <Icon name="find" />
          <Icon name="user" />
          <SignIn>登录</SignIn>
          <Caret $light />
          <Icon name="exch" />
          <Icon name="a360" />
          <Caret $light />
          <IconButton $w={20} aria-label="帮助"><Icon name="help" /></IconButton>
          <Caret $light />
        </InfoCenter>
        <WindowButtons>
          <button aria-label="最小化"><Icon name="min" size={12} /></button>
          <button aria-label="还原"><Icon name="max" size={12} /></button>
          <button aria-label="关闭"><Icon name="close" size={12} /></button>
        </WindowButtons>
      </TitleBar>
      <MenuBar>
        {menus.map((m) => <button key={m}>{m}</button>)}
        <DocButtons>
          <IconButton $w={13} aria-label="最小化文档"><Icon name="dmin" size={12} /></IconButton>
          <IconButton $w={12} aria-label="还原文档"><Icon name="dmax" size={12} /></IconButton>
          <IconButton $w={11} aria-label="关闭文档"><Icon name="dclose" size={11} /></IconButton>
        </DocButtons>
      </MenuBar>
      <TabBar>
        <DocTab $w={88}>Drawing1*</DocTab>
        <DocTab $w={88}>动态图库*</DocTab>
        <DocTab $w={120} $active>瀚宁作业（第二课改）*<TabClose>✕</TabClose></DocTab>
        <NewTab aria-label="新建">+</NewTab>
      </TabBar>

      <Toolbars>
        <ToolRow>
          <Grip />
          <Strip><Tools names={standardTools} /></Strip>
          <Grip />
          <Strip>
            <Tools names={["textstyle"]} /><Pick label="文字样式" value="Standard" w={86} pad={12} />
            <Separator /><Tools names={["dimstyle"]} /><Pick label="标注样式" value="瀚宁-25" w={86} pad={12} />
            <Separator /><Tools names={["tablestyle"]} /><Pick label="表格样式" value="Standard" w={86} pad={2} />
            <Separator /><Tools names={["mleader"]} /><Pick label="多重引线样式" value="Standard" w={84} pad={12} />
          </Strip>
        </ToolRow>
        <ToolRow>
          <Grip />
          <Strip>
            <Pick label="工作空间" value="AutoCAD 经典" w={124} />
            <Tools names={["gear", "gearbox"]} />
          </Strip>
          <Grip />
          <Strip>
            <Tools names={["layermgr"]} />
            <Pick label="图层" value="M-门" w={215} pad={1}>
              {["bulb", "sun", "vpfreeze", "unlock", "green"].map((n) => <Icon key={n} name={n} size={10} />)}
            </Pick>
            <Tools names={["layer1", "layer2", "layer3"]} />
          </Strip>
          <Grip />
          <Strip>
            <Pick label="颜色" value="ByBlock" w={108} song pad={3}><Swatch /></Pick>
            <Separator />
            <Pick label="线型" value="ACAD...03W100" w={114} song pad={2}><Dash $w={10} $gap={14} /><Dash $w={10} $gap={5} /></Pick>
            <Separator />
            <Pick label="线宽" value="ByLayer" w={89} song pad={2}><Dash $w={25} $gap={1} /></Pick>
            <Separator />
            <Pick label="打印样式" value="ByColor" w={84} song pad={4} />
          </Strip>
        </ToolRow>
      </Toolbars>

      <Work>
        <SideColumn>
          <SideGrip />
          <SideStrip $h={315}><Tools names={drawTools} /></SideStrip>
        </SideColumn>
        <Frame>
          <CanvasRow>
            <Canvas>
              <Drawing fill="none" shapeRendering="crispEdges" aria-label="图形">
                <path d="M156 220.500H867" stroke="#5e2030" />
                <path d="M156 220.500H867" stroke="#b8142e" strokeDasharray="4 1" />
                <path d="M158 241.500H870" stroke="#7d868b" strokeDasharray="1 2" />
                <path d="M158.500 241V276" stroke="#7d868b" strokeDasharray="1 2" />
                <path d="M158 276.500H870" stroke="#8b9194" />
                <path d="M164 367.500H886" stroke="#bfc71c" />
                <path d="M840 275.500H901M870.500 245V306" stroke="#e4e6e4" />
                <path d="M157 241h2M869 241h2M869 277h2" stroke="#a8adb0" strokeWidth="2" />
              </Drawing>
              <ViewLabel>[－][俯视][二维线框]</ViewLabel>
              <Cube viewBox="0 0 100 102" fill="#b9bdbf" textAnchor="middle" aria-label="视图方位">
                <circle cx="50" cy="50" r="38" fill="none" stroke="#465056" strokeWidth="9" />
                <path d="M32 32h37v37H32z" fill="#bcc1c3" />
                <path d="M39 39h23v23H39z" fill="#b0b7ba" />
                <text x="50" y="57" fontSize="19" fill="#50575b">上</text>
                <text x="50" y="15">北</text>
                <text x="10" y="56">西</text>
                <text x="90" y="56">东</text>
                <text x="50" y="96">南</text>
              </Cube>
              <Wcs>WCS<Svg $size={6} viewBox="0 0 6 6" fill="none" stroke="#b4b9bc"><path d="M.5 1.500h5L3 4.500z" /></Svg></Wcs>
              <LengthInput aria-label="长度" defaultValue="1396.3497" />
              <Tip $x={860} $y={245} $w={19}>0°</Tip>
              <Tip $x={880} $y={287} $w={96}>正交: 1392.1481 &lt; 0°</Tip>
              <Ucs viewBox="0 0 60 56" fill="none" stroke="#c9cdcf">
                <path d="M5.500 12v36M5 48.500h36M2.500 45.500h6v6h-6z" />
                <path d="M6 1l4 4 4-4M10 5v5M44 39l9 9M53 39l-9 9" />
              </Ucs>
            </Canvas>
            <VScroll><Up /><Thumb $v /><Down /></VScroll>
          </CanvasRow>
          <LayoutBar>
            {["M2 1v8M8 1L4 5l4 4z", "M7 1L3 5l4 4z", "M3 1l4 4-4 4z", "M8 1v8M2 1l4 4-4 4z"].map((d, i) => (
              <NavButton key={d} aria-label={["最前", "向前", "向后", "最后"][i]}>
                <Svg $size={8} viewBox="0 0 10 10" fill="#555" stroke="#555"><path d={d} /></Svg>
              </NavButton>
            ))}
            <LayoutTab $active>模型</LayoutTab>
            <LayoutTab>布局1</LayoutTab>
            <Slash />
            <LayoutTab>布局2</LayoutTab>
            <Slash />
            <HScroll><SideArrow $left /><Track $grow={212} /><Thumb /><Track $grow={146} /><SideArrow /></HScroll>
          </LayoutBar>
        </Frame>
        <SideColumn $right>
          <SideGrip />
          <SideStrip $h={283}><Tools names={modifyTools} /></SideStrip>
          <SideGrip />
          <SideStrip $h={101}>
            <Tools names={["front", "back", "above", "under"]} />
            <hr />
            <Tools names={["abc", "hback"]} />
          </SideStrip>
        </SideColumn>
      </Work>

      <Command>
        <CommandGrip><Dots /><Icon name="x" size={9} /><Icon name="wrench" size={12} /></CommandGrip>
        <CommandText>
          <History><small>LINE</small><span>指定第一个点:</span></History>
          <Prompt>
            <Icon name="cmd" /><Caret $light />
            <b>LINE</b>
            <span>指定下一点或 [<mark>放弃(<em>U</em>)</mark>]:</span>
            <input aria-label="命令" />
          </Prompt>
        </CommandText>
        <Caption>室内设计行业交流<span>QQ</span>群<i>：</i><span>885073085</span></Caption>
      </Command>

      <Status>
        <Coords>345848.3808, 561500.7214, 0.0000</Coords>
        <Toggles>
          {toggles.map(([n, on]) => <Toggle key={n} $on={on} aria-label={n} aria-pressed={on}><Icon name={n} size={13} /></Toggle>)}
        </Toggles>
        <StatusRight>
          <Toggle aria-label="模型"><Icon name="model" size={12} /></Toggle>
          <Toggle aria-label="快速查看"><Icon name="views" size={12} /></Toggle>
          <ScaleButton aria-label="注释比例"><Icon name="scaleA" size={12} />1:1<Caret /></ScaleButton>
          <Toggle aria-label="注释可见性"><Icon name="scaleB" size={12} /></Toggle>
        </StatusRight>
      </Status>

      <Ime>
        <Sogou viewBox="0 0 22 20">
          <path d="M2 3l16-3 3 16-16 3z" fill="#e8502a" />
          <path d="M15.500 5.500c-3-2-8-1.500-7.500 1.500s7.500 1 8 4-6 3.500-8.500 1.500" fill="none" stroke="#fff" strokeWidth="2.600" />
        </Sogou>
        <Svg $size={11} viewBox="0 0 12 12" fill="none" stroke="#344a9d" strokeWidth="1.800"><path d="M1 11L5.500 1h1L11 11M3 8h6" /></Svg>
        <Svg $size={11} viewBox="0 0 12 12" fill="#344a9d"><path d="M7 1c6 5 0 13-7 8 5 0 8-3 7-8z" /></Svg>
        <Svg $size={10} viewBox="0 0 12 12" fill="#344a9d"><circle cx="3" cy="4" r="1.600" /><path d="M8 6c4 0 3 4 0 5 1-2 1-3 0-5z" /></Svg>
        <Svg $size={12} viewBox="0 0 12 12" fill="none" stroke="#344a9d"><path d="M.5 2.500h11v7H.5zM2 4.500h8M2 6.500h8M3.500 8.500h5" /></Svg>
        <Svg $size={12} viewBox="0 0 12 12" fill="#b9c6d8"><circle cx="5" cy="3" r="2" /><path d="M1 11c0-6 7-6 7-2h3v2z" /></Svg>
        <Svg $size={11} viewBox="0 0 12 12" fill="#344a9d"><path d="M4 1c1 1.500 3 1.500 4 0l4 2-1 3-2-.5V12H3V5.500L1 6 0 3z" /></Svg>
        <Svg $size={11} viewBox="0 0 12 12" fill="none" stroke="#344a9d" strokeWidth="2.200"><path d="M1 11l6-6" /><path d="M8 1c-3 2-1 5 3 3" /></Svg>
      </Ime>
    </Page>
  );
}
